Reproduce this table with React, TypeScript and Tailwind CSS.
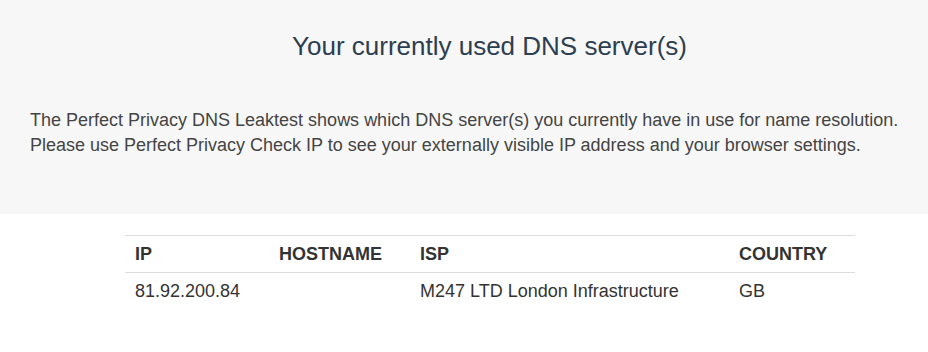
import React from 'react';

const rows = [
  { ip: '81.92.200.84', hostname: '', isp: 'M247 LTD London Infrastructure', country: 'GB' },
];

const App = () => {
  return (
    <div className="min-h-[352px] bg-white text-[#333] font-['Liberation_Sans',Arial,sans-serif]">
      <div className="bg-[#f7f7f7] pl-[30px] pr-[20px] pt-[30px] pb-[56px]">
        <h1 className="text-center text-[26px] leading-[32px] text-[#2c3e50] ml-[41px]">
          Your currently used DNS server(s)
        </h1>
        <p className="mt-[46px] text-[18px] leading-[25px] text-[#444] whitespace-nowrap">
          The Perfect Privacy DNS Leaktest shows which DNS server(s) you currently have in use for name resolution.
          <br />
          Please use Perfect Privacy Check IP to see your externally visible IP address and your browser settings.
        </p>
      </div>

      <div className="pt-[21px] flex justify-center">
        <table className="w-[730px] ml-[52px] text-[18px] text-[#333] border-collapse">
          <thead>
            <tr className="border-t border-b border-[#ddd]">
              <th className="w-[144px] text-left font-bold px-[10px] py-[8px] leading-[20px]">IP</th>
              <th className="w-[141px] text-left font-bold px-[10px] py-[8px] leading-[20px]">HOSTNAME</th>
              <th className="w-[319px] text-left font-bold px-[10px] py-[8px] leading-[20px]">ISP</th>
              <th className="text-left font-bold px-[10px] py-[8px] leading-[20px]">COUNTRY</th>
            </tr>
          </thead>
          <tbody>
            {rows.map((r) => (
              <tr key={r.ip}>
                <td className="px-[10px] py-[8px] leading-[20px]">{r.ip}</td>
                <td className="px-[10px] py-[8px] leading-[20px]">{r.hostname}</td>
                <td className="px-[10px] py-[8px] leading-[20px]">{r.isp}</td>
                <td className="px-[10px] py-[8px] leading-[20px]">{r.country}</td>
              </tr>
            ))}
          </tbody>
        </table>
      </div>
    </div>
  );
};

export default App;
